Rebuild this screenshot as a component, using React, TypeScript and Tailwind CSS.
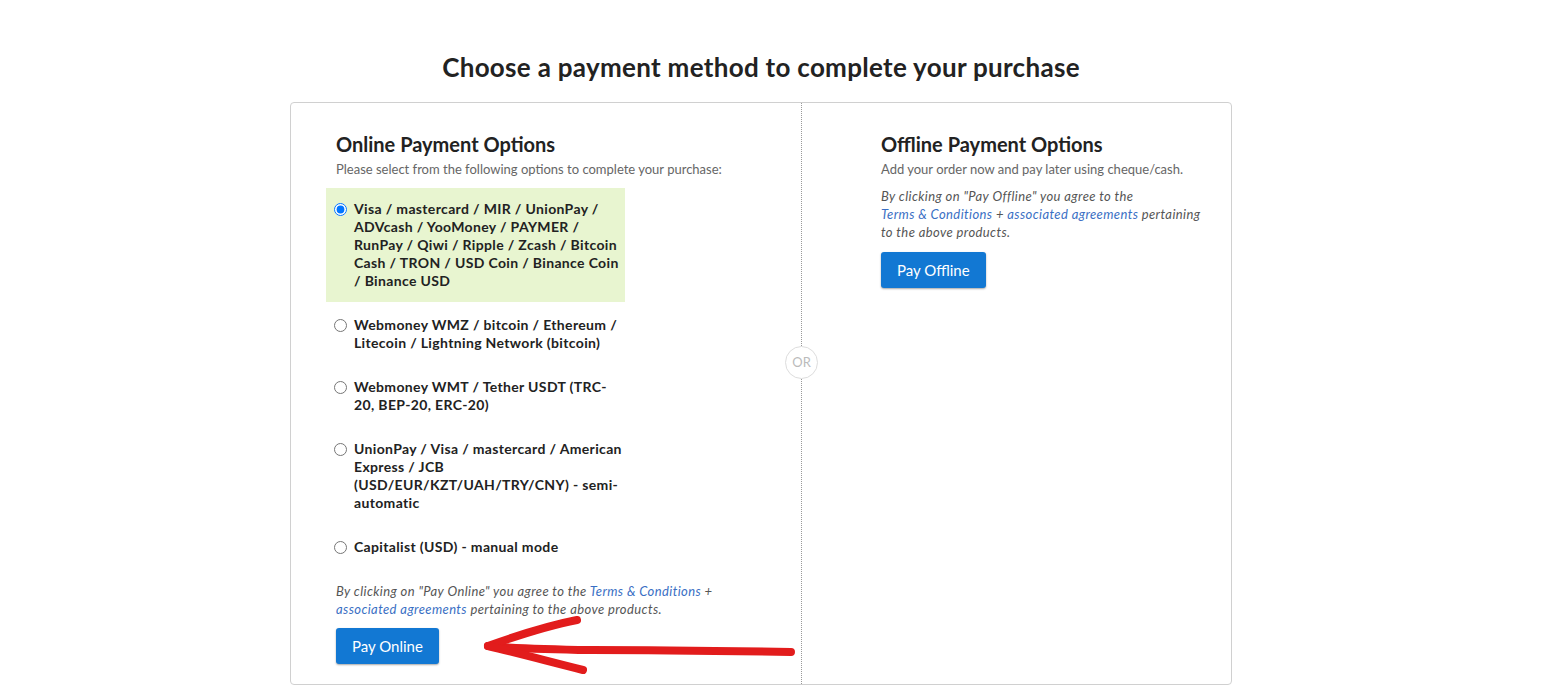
import { useState } from 'react';

const options = [
  'Visa / mastercard / MIR / UnionPay / ADVcash / YooMoney / PAYMER / RunPay / Qiwi / Ripple / Zcash / Bitcoin Cash / TRON / USD Coin / Binance Coin / Binance USD',
  'Webmoney WMZ / bitcoin / Ethereum / Litecoin / Lightning Network (bitcoin)',
  'Webmoney WMT / Tether USDT (TRC-20, BEP-20, ERC-20)',
  'UnionPay / Visa / mastercard / American Express / JCB (USD/EUR/KZT/UAH/TRY/CNY) - semi-automatic',
  'Capitalist (USD) - manual mode',
];

function Link({ children }: { children: React.ReactNode }) {
  return <a href="#" className="whitespace-nowrap text-[#3a6fc4] hover:underline">{children}</a>;
}

export default function App() {
  const [selected, setSelected] = useState(0);

  return (
    <div className="min-h-screen bg-white font-['Lato','Liberation_Sans',sans-serif] text-[#222]">
      <div className="flex flex-col items-center pr-[37px] pt-[51px]">
        <h1 className="text-[26px] font-bold leading-[32px] tracking-[0.3px] text-[#222]">
          Choose a payment method to complete your purchase
        </h1>

        <div className="relative mt-[19px] flex w-[942px] rounded border border-[#d0d0d0]">
          {/* online */}
          <div className="w-[511px] shrink-0 border-r border-dotted border-[#999] pl-[45px] pr-[40px] pt-[28px] pb-[20px]">
            <h2 className="text-[20px] font-bold leading-[26px] text-[#222]">Online Payment Options</h2>
            <p className="mt-[3px] text-[13px] leading-[18px] text-[#666]">
              Please select from the following options to complete your purchase:
            </p>

            <div className="mt-[10px] -ml-[10px] flex w-[299px] flex-col gap-[2px]">
              {options.map((label, i) => (
                <label
                  key={i}
                  className={`flex cursor-pointer items-start gap-[7px] py-[12px] pl-[8px] ${
                    selected === i ? 'bg-[#e8f5d0]' : ''
                  }`}
                >
                  <input
                    type="radio"
                    name="pay"
                    checked={selected === i}
                    onChange={() => setSelected(i)}
                    className="mt-[3px] h-[13px] w-[13px] shrink-0"
                  />
                  <span className="text-[14px] font-bold leading-[18px] tracking-[0.35px] text-[#222]">
                    {label}
                  </span>
                </label>
              ))}
            </div>

            <p className="mt-[14px] text-[13px] italic leading-[18px] tracking-[0.4px] text-[#555]">
              By clicking on "Pay Online" you agree to the <Link>Terms &amp; Conditions</Link> +{' '}
              <Link>associated agreements</Link> pertaining to the above products.
            </p>
            <button className="mt-[10px] h-[36px] rounded-[3px] bg-[#1278d3] px-[16px] text-[15px] text-white shadow-[0_1px_2px_rgba(0,0,0,0.35)]">
              Pay Online
            </button>
          </div>

          {/* offline */}
          <div className="flex-1 pl-[79px] pr-[28px] pt-[28px]">
            <h2 className="text-[20px] font-bold leading-[26px] text-[#222]">Offline Payment Options</h2>
            <p className="mt-[3px] text-[13px] leading-[18px] text-[#666]">
              Add your order now and pay later using cheque/cash.
            </p>
            <p className="mt-[9px] text-[13px] italic leading-[18px] tracking-[0.4px] text-[#555]">
              By clicking on "Pay Offline" you agree to the <Link>Terms &amp; Conditions</Link> +{' '}
              <Link>associated agreements</Link> pertaining to the above products.
            </p>
            <button className="mt-[11px] h-[36px] rounded-[3px] bg-[#1278d3] px-[16px] text-[15px] text-white shadow-[0_1px_2px_rgba(0,0,0,0.35)]">
              Pay Offline
            </button>
          </div>

          {/* OR badge */}
          <div className="absolute left-[494px] top-[243px] flex h-[33px] w-[33px] items-center justify-center rounded-full border border-[#ddd] bg-white text-[13px] text-[#bbb]">
            OR
          </div>

          {/* red arrow annotation */}
          <svg
            className="pointer-events-none absolute left-[180px] top-[505px]"
            width="330"
            height="80"
            viewBox="0 0 330 80"
          >
            <g fill="none" stroke="#e21c1c" strokeWidth="8" strokeLinecap="round" strokeLinejoin="round">
              <path d="M17 38 C40 40 60 41 120 42 C200 42 260 43 320 44" />
              <path d="M17 38 C45 28 75 18 106 12" />
              <path d="M17 38 C50 46 80 54 112 62" />
            </g>
          </svg>
        </div>
      </div>
    </div>
  );
}
